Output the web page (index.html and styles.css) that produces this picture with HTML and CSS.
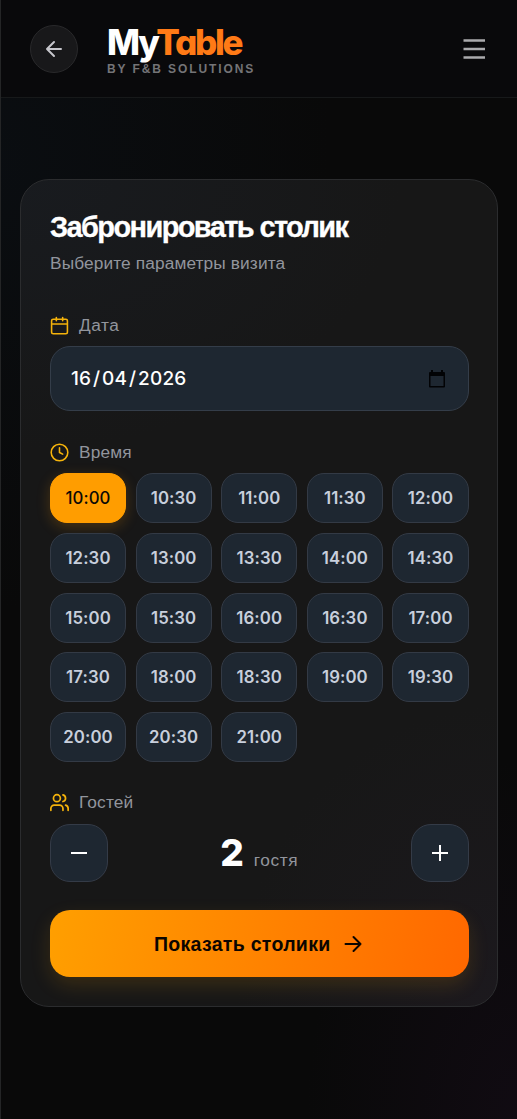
FILE: index.html
```html
<!DOCTYPE html>
<html lang="ru">
<head>
<meta charset="utf-8">
<title>MyTable</title>
<link rel="stylesheet" href="styles.css">
</head>
<body>
<div class="page">
  <header class="header">
    <button class="back" aria-label="Назад"><svg class="ic-back" viewBox="0 0 24 24"><path d="m12 19-7-7 7-7M19 12H5"/></svg></button>
    <div class="brand">
      <div class="logo"><span class="logo-my">My</span><span class="logo-table">Table</span></div>
      <div class="tagline">BY F&amp;B SOLUTIONS</div>
    </div>
    <button class="menu" aria-label="Меню"><svg class="ic-menu" viewBox="0 0 24 24"><path d="M1.500 3.500h21.500M1.500 12h21.500M1.500 20.500h21.500"/></svg></button>
  </header>
  <main class="card">
    <h1 class="title">Забронировать столик</h1>
    <p class="subtitle">Выберите параметры визита</p>
    <section class="field field-date">
      <div class="label"><svg class="ic" viewBox="0 0 24 24"><path d="M8 2v4M16 2v4M3 10h18"/><rect x="2" y="4" width="20" height="18.500" rx="2"/></svg><span class="lt-date">Дата</span></div>
      <div class="date"><span class="date-value"><span>16</span><span class="slash">/</span><span>04</span><span class="slash">/</span><span>2026</span></span><svg class="ic-picker" viewBox="0 0 16 18"><path fill-rule="evenodd" d="M2 0h2v2h8V0h2v2h1a1 1 0 0 1 1 1v13.500a1 1 0 0 1-1 1H1a1 1 0 0 1-1-1V3a1 1 0 0 1 1-1h1zM1.500 6v10h13V6z"/></svg></div>
    </section>
    <section class="field field-time">
      <div class="label"><svg class="ic" viewBox="0 0 24 24"><circle cx="12" cy="12" r="10.500"/><path d="M12 6v6l4 2"/></svg><span class="lt-time">Время</span></div>
      <div class="slots">
        <button class="slot active">10:00</button><button class="slot">10:30</button><button class="slot">11:00</button><button class="slot">11:30</button><button class="slot">12:00</button>
        <button class="slot">12:30</button><button class="slot">13:00</button><button class="slot">13:30</button><button class="slot">14:00</button><button class="slot">14:30</button>
        <button class="slot">15:00</button><button class="slot">15:30</button><button class="slot">16:00</button><button class="slot">16:30</button><button class="slot">17:00</button>
        <button class="slot">17:30</button><button class="slot">18:00</button><button class="slot">18:30</button><button class="slot">19:00</button><button class="slot">19:30</button>
        <button class="slot">20:00</button><button class="slot">20:30</button><button class="slot">21:00</button>
      </div>
    </section>
    <section class="field field-guests">
      <div class="label"><svg class="ic" viewBox="1 1 22 22"><path d="M16 21v-2a4 4 0 0 0-4-4H6a4 4 0 0 0-4 4v2"/><circle cx="9" cy="7" r="4"/><path d="M22 21v-2a4 4 0 0 0-3-3.870M16 3.130a4 4 0 0 1 0 7.750"/></svg><span class="lt-guests">Гостей</span></div>
      <div class="stepper">
        <button class="step" aria-label="Меньше"><svg class="ic-step" viewBox="0 0 24 24"><path d="M4 12h16"/></svg></button>
        <div class="count"><span class="num">2</span><span class="unit">гостя</span></div>
        <button class="step" aria-label="Больше"><svg class="ic-step" viewBox="0 0 24 24"><path d="M4 12h16M12 4v16"/></svg></button>
      </div>
    </section>
    <button class="cta"><span class="cta-text">Показать столики</span><svg class="ic-cta" viewBox="0 0 24 24"><path d="M4.500 12h15M12.500 5l7 7-7 7"/></svg></button>
  </main>
</div>
</body>
</html>
```
FILE: styles.css
```css
* { box-sizing: border-box; }
body { margin: 0; background: #090909; font-family: "Liberation Sans", Arial, sans-serif; }
button { margin: 0; padding: 0; border: 0; background: none; font: inherit; color: inherit; display: flex; align-items: center; justify-content: center; }
svg { display: block; flex: none; fill: none; stroke: currentColor; stroke-width: 2; stroke-linecap: round; stroke-linejoin: round; }
.page {
  height: 1119px; overflow: hidden; border-left: 1px solid #242526;
  background:
    radial-gradient(ellipse 330px 450px at 0 160px, rgba(12, 20, 29, .4), transparent),
    radial-gradient(ellipse 210px 360px at 100% 100%, rgba(24, 13, 27, .5), transparent),
    #090909;
}
.header { height: 98px; border-bottom: 1px solid #17191a; background: #09090b; display: flex; align-items: center; padding: 0 31px 0 29px; }
.back { width: 48px; height: 48px; border-radius: 50%; border: 1px solid #29292b; background: #18181a; color: #c6c6cc; }
.ic-back { width: 24px; height: 24px; }
.brand { margin-left: 29px; height: 48px; }
.logo { font: 800 35px/35px Inter, sans-serif; font-feature-settings: "cv11", "ss03"; letter-spacing: -2.300px; height: 37px; white-space: nowrap; }
.logo-my { color: #fff; }
.logo-table { color: #ff7a16; }
.tagline { font-size: 12px; line-height: 14px; font-weight: 700; letter-spacing: 1.900px; color: #747477; white-space: nowrap; }
.menu { margin-left: auto; color: #aaaaad; }
.ic-menu { width: 24px; height: 24px; stroke-linecap: butt; stroke-width: 2.4; }
.card { width: 478px; height: 828px; margin: 81px 0 0 19px; padding: 28px 28.500px 28px 29px; border: 1px solid #2b2c2e; border-radius: 29px;
  background:
    radial-gradient(ellipse 380px 270px at 0 0, rgba(26, 31, 39, .5), transparent),
    radial-gradient(ellipse 260px 300px at 100% 100%, rgba(33, 27, 36, .5), transparent),
    #171717;
}
.title { margin: 0; font-size: 29px; line-height: 38px; font-weight: 700; letter-spacing: -1.620px; -webkit-text-stroke: .3px #fff; color: #fff; white-space: nowrap; }
.subtitle { margin: 6px 0 0; font-size: 17.300px; line-height: 22px; letter-spacing: .120px; color: #92959d; white-space: nowrap; }
.label { display: flex; align-items: center; gap: 10px; height: 20px; font-size: 17.300px; line-height: 18px; letter-spacing: .150px; color: #92959d; }
.label span { padding-bottom: 2px; }
.lt-date { letter-spacing: .500px; }
.ic { width: 19px; height: 19px; margin-top: -1px; color: #f5b30b; }
.field-date { margin-top: 42px; }
.date { margin-top: 10.400px; height: 64.500px; border: 1px solid #343d49; border-radius: 20px; background: #1e2731; display: flex; align-items: center; justify-content: space-between; padding: 0 23px 0 20px; }
.date-value { display: flex; gap: 1.800px; padding-top: 1px; font: 500 19px/24px Inter, sans-serif; letter-spacing: .200px; color: #fff; }
.ic-picker { width: 16px; height: 18px; fill: #020305; stroke: none; }
.field-time { margin-top: 32px; }
.slots { margin-top: 10.600px; display: grid; grid-template-columns: repeat(5, 1fr); gap: 9.600px; }
.slot { height: 50px; border: 1px solid #333a45; border-radius: 17px; background: #1e2731; color: #c8cfdc; font: 600 16.800px/24px Inter, sans-serif; letter-spacing: .1px; }
.slot.active { border-color: #ff9d00; background: #ff9d00; color: #0b0906; font-weight: 500; box-shadow: 0 4px 14px rgba(255, 157, 0, .22); }
.field-guests { margin-top: 31px; }
.stepper { margin-top: 11.200px; display: flex; align-items: center; justify-content: space-between; }
.step { width: 57.500px; height: 57.500px; border: 1px solid #343b47; border-radius: 20px; background: #1e2731; color: #fff; }
.ic-step { width: 24px; height: 24px; stroke-linecap: butt; }
.count { display: flex; align-items: baseline; gap: 10px; }
.num { font: 800 37px/44px Inter, sans-serif; color: #fff; }
.unit { font-size: 17.300px; letter-spacing: .600px; color: #92959d; }
.cta { width: 100%; height: 67px; margin-top: 28.500px; border-radius: 20px; gap: 10px; color: #0b0500; background: linear-gradient(100deg, #ff9f00, #ff6800); box-shadow: 0 8px 20px rgba(255, 166, 0, .15); }
.cta-text { font: 700 19.500px/24px "Liberation Sans", Arial, sans-serif; letter-spacing: .300px; white-space: nowrap; }
.ic-cta { width: 24px; height: 24px; }
```
